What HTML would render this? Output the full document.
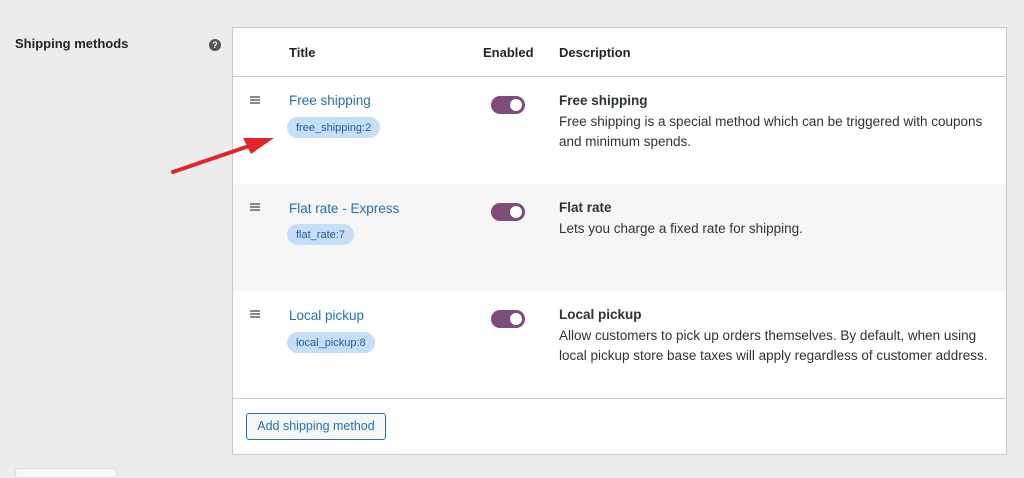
<!DOCTYPE html>
<html><head><style>
*{margin:0;padding:0;box-sizing:border-box}
body{width:1024px;height:475px;background:#ececec;font-family:"Liberation Sans",sans-serif;position:relative;overflow:hidden;color:#1e1e1e}
.a{position:absolute}
.box{left:232px;top:27px;width:775px;height:428px;background:#fff;border:1px solid #c8c8c8}
.row{position:absolute;left:0;width:773px;height:107px}
.lbl{font-size:13px;font-weight:bold;color:#1d2327}
.link{font-size:13.5px;color:#2271b1}
.badge{position:absolute;height:21px;border-radius:11px;background:#c5dff9;color:#2a5a9a;font-size:11px;line-height:22px;padding:0 9px}
.tog{position:absolute;width:34px;height:18px;border-radius:9px;background:#7f4a7c}
.tog::after{content:"";position:absolute;right:3px;top:3px;width:12px;height:12px;border-radius:50%;background:#fff}
.ham{position:absolute;width:10px;height:8px;background:linear-gradient(#888 0 2px,transparent 2px 3px,#888 3px 5px,transparent 5px 6px,#888 6px 8px)}
.d{position:absolute;font-size:13.5px;line-height:20.5px;color:#2c3338}
</style></head><body>
<div class="a lbl" style="left:15px;top:36px">Shipping methods</div>
<div class="a" style="left:209px;top:39px;width:12px;height:12px;border-radius:50%;background:#555;color:#fff;font-size:9px;font-weight:bold;text-align:center;line-height:12px">?</div>
<div class="a box">
 <div class="a lbl" style="left:56px;top:17px">Title</div>
 <div class="a lbl" style="left:250px;top:17px">Enabled</div>
 <div class="a lbl" style="left:326px;top:17px">Description</div>
 <div class="a" style="left:0;top:48px;width:773px;border-top:1px solid #c8c8c8"></div>
 <div class="row" style="top:49px;background:#fff">
  <div class="ham" style="left:17px;top:19px"></div>
  <div class="a link" style="left:56px;top:16px">Free shipping</div>
  <div class="badge" style="left:54px;top:40px">free_shipping:2</div>
  <div class="tog" style="left:258px;top:19px"></div>
  <div class="d" style="left:326px;top:14px"><b>Free shipping</b><br>Free shipping is a special method which can be triggered with coupons<br>and minimum spends.</div>
 </div>
 <div class="row" style="top:156px;background:#f6f6f6">
  <div class="ham" style="left:17px;top:19px"></div>
  <div class="a link" style="left:56px;top:17px">Flat rate - Express</div>
  <div class="badge" style="left:54px;top:40px">flat_rate:7</div>
  <div class="tog" style="left:258px;top:19px"></div>
  <div class="d" style="left:326px;top:14px"><b>Flat rate</b><br>Lets you charge a fixed rate for shipping.</div>
 </div>
 <div class="row" style="top:263px;background:#fff">
  <div class="ham" style="left:17px;top:19px"></div>
  <div class="a link" style="left:56px;top:17px">Local pickup</div>
  <div class="badge" style="left:54px;top:41px">local_pickup:8</div>
  <div class="tog" style="left:258px;top:19px"></div>
  <div class="d" style="left:326px;top:14px"><b>Local pickup</b><br>Allow customers to pick up orders themselves. By default, when using<br>local pickup store base taxes will apply regardless of customer address.</div>
 </div>
 <div class="a" style="left:0;top:370px;width:773px;border-top:1px solid #c8c8c8"></div>
 <div class="a" style="left:13px;top:385px;width:140px;height:27px;border:1px solid #2271b1;border-radius:3px;background:#f6f7f7;color:#2271b1;font-size:12.5px;line-height:25px;text-align:center">Add shipping method</div>
</div>
<div class="a" style="left:15px;top:468px;width:102px;height:10px;background:#f6f7f7;border:1px solid #ddd;border-radius:3px"></div>
<svg class="a" style="left:0;top:0" width="1024" height="475"><line x1="173" y1="172" x2="252" y2="145" stroke="#e0262a" stroke-width="4" stroke-linecap="round"/><polygon points="274,138 243,138 251,154" fill="#e0262a"/></svg>
</body></html>
